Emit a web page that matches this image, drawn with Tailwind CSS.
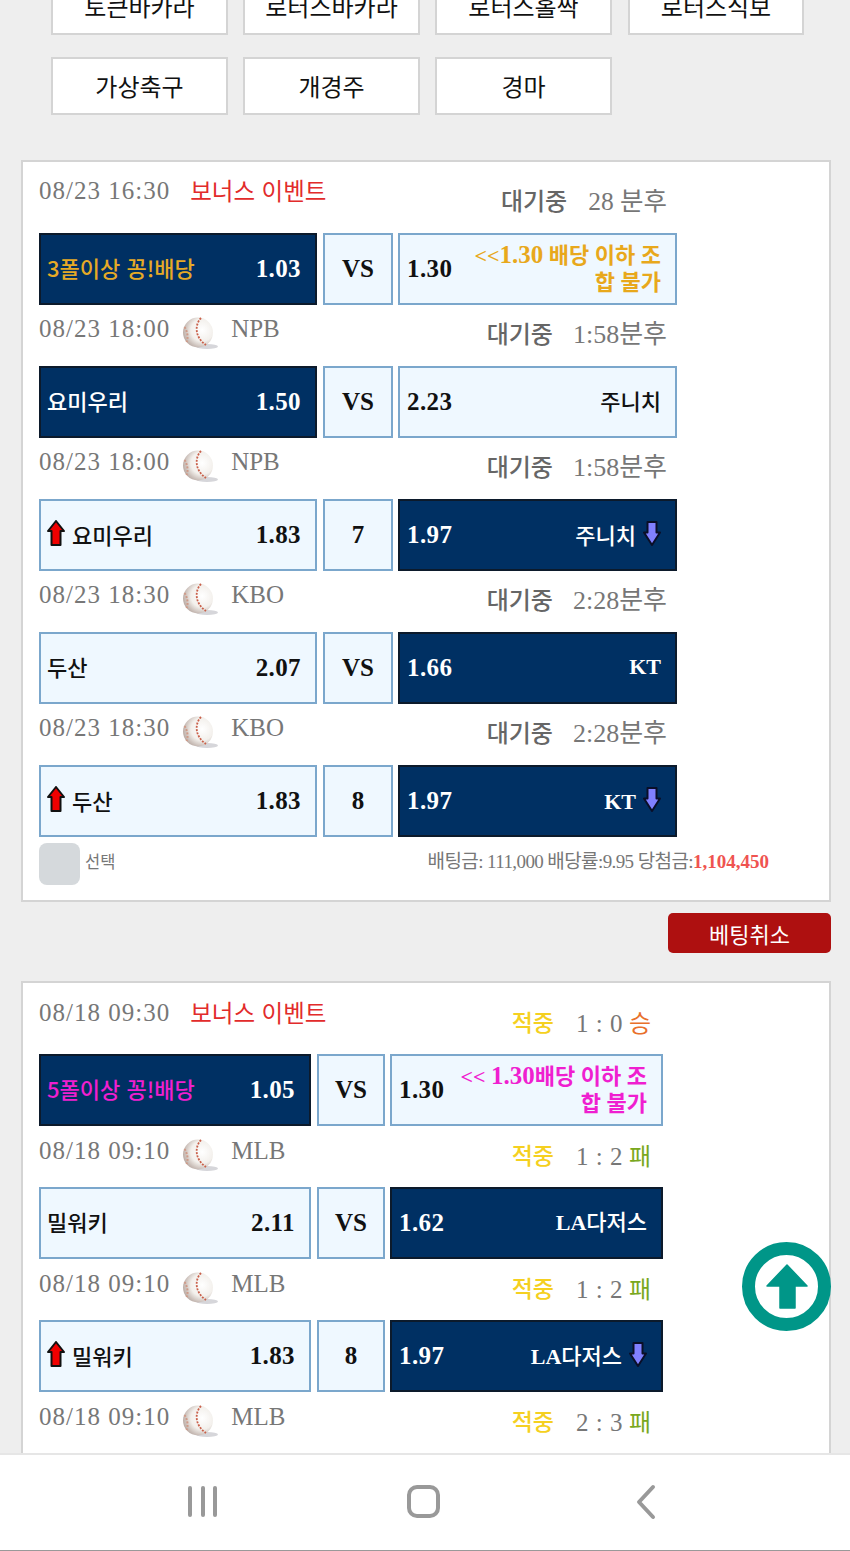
<!DOCTYPE html>
<html lang="ko"><head><meta charset="utf-8">
<script src="https://cdn.jsdelivr.net/npm/@tailwindcss/browser@4"></script>
</head>
<body class="m-0">
<svg class="absolute w-0 h-0" width="0" height="0">
<defs>
<radialGradient id="bg" cx="64%" cy="42%" r="68%"><stop offset="0" stop-color="#ffffff"/><stop offset=".55" stop-color="#f3f0ec"/><stop offset="1" stop-color="#b5a59e"/></radialGradient>
<symbol id="ball" viewBox="0 0 38 38">
<ellipse cx="25" cy="29.500" rx="11" ry="2.500" fill="#d6d6da"/>
<circle cx="16" cy="15.500" r="15" fill="url(#bg)"/>
<path d="M2.500 10c3 4 4 11 2 15" fill="none" stroke="#cf9a88" stroke-width="2" stroke-dasharray="2 1.500"/>
<path d="M19 1c-6 6-7 19 5 27" fill="none" stroke="#c9604a" stroke-width="1.800" stroke-dasharray="2 1.300"/>
</symbol>
<symbol id="up" viewBox="0 0 18 26"><path d="M9 1 17 11H13.500V25H4.500V11H1Z" fill="#f00000" stroke="#111" stroke-width="2" stroke-linejoin="round"/></symbol>
<symbol id="down" viewBox="0 0 18 25"><path d="M4.500 1H13.500V11.500H17L9 24 1 11.500H4.500Z" fill="#8080ff" stroke="#0a0f28" stroke-width="2" stroke-linejoin="round"/></symbol>
</defs>
</svg>
<div class="relative w-[850px] h-[1551px] overflow-hidden bg-[#eeeeee] font-['Liberation_Serif','Noto_Sans_CJK_KR',serif]">

  <div class="grid grid-cols-[177px_177px_177px_177px] gap-x-[15px] gap-y-[22px] pl-[51px] -mt-[23px] font-['Noto_Sans_CJK_KR',sans-serif] text-[24px] text-[#111]">
    <div class="h-[58px] bg-white border-2 border-[#d4d4d4] flex items-center justify-center leading-none">토큰바카라</div>
    <div class="h-[58px] bg-white border-2 border-[#d4d4d4] flex items-center justify-center leading-none">로터스바카라</div>
    <div class="h-[58px] bg-white border-2 border-[#d4d4d4] flex items-center justify-center leading-none">로터스홀짝</div>
    <div class="h-[58px] ml-[1px] bg-white border-2 border-[#d4d4d4] flex items-center justify-center leading-none">로터스식보</div>
    <div class="h-[58px] bg-white border-2 border-[#d4d4d4] flex items-center justify-center leading-none">가상축구</div>
    <div class="h-[58px] bg-white border-2 border-[#d4d4d4] flex items-center justify-center leading-none">개경주</div>
    <div class="h-[58px] bg-white border-2 border-[#d4d4d4] flex items-center justify-center leading-none">경마</div>
  </div>

  <!-- card 1 -->
  <div class="mt-[45px] ml-[21px] w-[810px] h-[742px] bg-white border-2 border-[#d4d4d4] pl-4">
    <div class="w-[628px] h-[71px] flex justify-between items-start">
      <div class="pt-[14px] flex items-center gap-5 text-[25px] leading-[30px] text-[#777] tracking-[1px]"><span>08/23 16:30</span><span class="-mt-[2px] font-['Noto_Sans_CJK_KR'] text-[23.500px] tracking-normal text-[#e22b2b]">보너스 이벤트</span></div>
      <div class="pt-[25px] flex items-center gap-[21px] leading-[30px]"><span class="text-[24px] font-medium text-[#666]">대기중</span><span class="text-[25.500px] text-[#777]">28 분후</span></div>
    </div>
    <div class="flex w-[638px] h-[72px]">
      <div class="w-[278px] bg-[#003063] border-2 border-[#0c1a2b] flex items-center justify-between pl-[6px] pr-[14px]"><span class="mb-[4px] font-['Noto_Sans_CJK_KR'] text-[22px] font-medium text-[#e6aa26] leading-none">3폴이상 꽁!배당</span><span class="mb-[2px] text-[25px] font-bold tracking-[.4px] text-white leading-none">1.03</span></div>
      <div class="ml-[6px] mr-[5px] w-[70px] bg-[#eff8ff] border-2 border-[#7ba7cc] flex items-center justify-center text-[25px] font-bold text-[#111] leading-none"><span class="mb-[2px]">VS</span></div>
      <div class="w-[279px] shrink-0 bg-[#eff8ff] border-2 border-[#7ba7cc] flex items-center justify-between pl-[7px] pr-[14px]"><span class="mb-[2px] text-[25px] font-bold tracking-[.4px] text-[#111] leading-none">1.30</span><span class="mb-[2px] text-right text-[#e8a81c] text-[22px] font-bold leading-[27px]">&lt;&lt;<span class="text-[25px]">1.30</span> 배당 이하 조<br>합 불가</span></div>
    </div>

    <div class="w-[628px] h-[61px] flex justify-between items-start">
      <div class="pt-[9px] flex items-center gap-3 text-[25px] leading-[30px] text-[#777]"><span class="tracking-[1px]">08/23 18:00</span><svg class="w-[38px] h-[38px] -my-1 -mr-[1px] translate-y-[7px] blur-[0.4px]"><use href="#ball"/></svg><span>NPB</span></div>
      <div class="pt-[15px] flex items-center gap-[20px] leading-[30px]"><span class="text-[24px] font-medium text-[#666]">대기중</span><span class="text-[26px] text-[#777]">1:58분후</span></div>
    </div>
    <div class="flex w-[638px] h-[72px]">
      <div class="w-[278px] bg-[#003063] border-2 border-[#0c1a2b] flex items-center justify-between pl-[6px] pr-[14px]"><span class="mb-[4px] font-['Noto_Sans_CJK_KR'] text-[22px] font-medium text-white leading-none">요미우리</span><span class="mb-[2px] text-[25px] font-bold tracking-[.4px] text-white leading-none">1.50</span></div>
      <div class="ml-[6px] mr-[5px] w-[70px] bg-[#eff8ff] border-2 border-[#7ba7cc] flex items-center justify-center text-[25px] font-bold text-[#111] leading-none"><span class="mb-[2px]">VS</span></div>
      <div class="w-[279px] shrink-0 bg-[#eff8ff] border-2 border-[#7ba7cc] flex items-center justify-between pl-[7px] pr-[14px]"><span class="mb-[2px] text-[25px] font-bold tracking-[.4px] text-[#111] leading-none">2.23</span><span class="mb-[4px] font-['Noto_Sans_CJK_KR'] text-[22px] font-medium text-[#111] leading-none">주니치</span></div>
    </div>

    <div class="w-[628px] h-[61px] flex justify-between items-start">
      <div class="pt-[9px] flex items-center gap-3 text-[25px] leading-[30px] text-[#777]"><span class="tracking-[1px]">08/23 18:00</span><svg class="w-[38px] h-[38px] -my-1 -mr-[1px] translate-y-[7px] blur-[0.4px]"><use href="#ball"/></svg><span>NPB</span></div>
      <div class="pt-[15px] flex items-center gap-[20px] leading-[30px]"><span class="text-[24px] font-medium text-[#666]">대기중</span><span class="text-[26px] text-[#777]">1:58분후</span></div>
    </div>
    <div class="flex w-[638px] h-[72px]">
      <div class="w-[278px] bg-[#eff8ff] border-2 border-[#7ba7cc] flex items-center justify-between pl-[6px] pr-[14px]"><span class="flex items-center gap-[7px] font-['Noto_Sans_CJK_KR'] text-[22px] font-medium text-[#111] leading-none"><svg class="w-[18px] h-[26px] -mt-[4px]"><use href="#up"/></svg><span class="mb-[2px]">요미우리</span></span><span class="mb-[2px] text-[25px] font-bold tracking-[.4px] text-[#111] leading-none">1.83</span></div>
      <div class="ml-[6px] mr-[5px] w-[70px] bg-[#eff8ff] border-2 border-[#7ba7cc] flex items-center justify-center text-[25px] font-bold text-[#111] leading-none"><span class="mb-[2px]">7</span></div>
      <div class="w-[279px] shrink-0 bg-[#003063] border-2 border-[#0c1a2b] flex items-center justify-between pl-[7px] pr-[14px]"><span class="mb-[2px] text-[25px] font-bold tracking-[.4px] text-white leading-none">1.97</span><span class="flex items-center gap-[7px] font-['Noto_Sans_CJK_KR'] text-[22px] font-medium text-white leading-none"><span class="mb-[2px]">주니치</span><svg class="w-[18px] h-[25px] -mt-[4px]"><use href="#down"/></svg></span></div>
    </div>

    <div class="w-[628px] h-[61px] flex justify-between items-start">
      <div class="pt-[9px] flex items-center gap-3 text-[25px] leading-[30px] text-[#777]"><span class="tracking-[1px]">08/23 18:30</span><svg class="w-[38px] h-[38px] -my-1 -mr-[1px] translate-y-[7px] blur-[0.4px]"><use href="#ball"/></svg><span>KBO</span></div>
      <div class="pt-[15px] flex items-center gap-[20px] leading-[30px]"><span class="text-[24px] font-medium text-[#666]">대기중</span><span class="text-[26px] text-[#777]">2:28분후</span></div>
    </div>
    <div class="flex w-[638px] h-[72px]">
      <div class="w-[278px] bg-[#eff8ff] border-2 border-[#7ba7cc] flex items-center justify-between pl-[6px] pr-[14px]"><span class="mb-[4px] font-['Noto_Sans_CJK_KR'] text-[22px] font-medium text-[#111] leading-none">두산</span><span class="mb-[2px] text-[25px] font-bold tracking-[.4px] text-[#111] leading-none">2.07</span></div>
      <div class="ml-[6px] mr-[5px] w-[70px] bg-[#eff8ff] border-2 border-[#7ba7cc] flex items-center justify-center text-[25px] font-bold text-[#111] leading-none"><span class="mb-[2px]">VS</span></div>
      <div class="w-[279px] shrink-0 bg-[#003063] border-2 border-[#0c1a2b] flex items-center justify-between pl-[7px] pr-[14px]"><span class="mb-[2px] text-[25px] font-bold tracking-[.4px] text-white leading-none">1.66</span><span class="mb-[2px] text-[22px] font-bold text-white leading-none">KT</span></div>
    </div>

    <div class="w-[628px] h-[61px] flex justify-between items-start">
      <div class="pt-[9px] flex items-center gap-3 text-[25px] leading-[30px] text-[#777]"><span class="tracking-[1px]">08/23 18:30</span><svg class="w-[38px] h-[38px] -my-1 -mr-[1px] translate-y-[7px] blur-[0.4px]"><use href="#ball"/></svg><span>KBO</span></div>
      <div class="pt-[15px] flex items-center gap-[20px] leading-[30px]"><span class="text-[24px] font-medium text-[#666]">대기중</span><span class="text-[26px] text-[#777]">2:28분후</span></div>
    </div>
    <div class="flex w-[638px] h-[72px]">
      <div class="w-[278px] bg-[#eff8ff] border-2 border-[#7ba7cc] flex items-center justify-between pl-[6px] pr-[14px]"><span class="flex items-center gap-[7px] font-['Noto_Sans_CJK_KR'] text-[22px] font-medium text-[#111] leading-none"><svg class="w-[18px] h-[26px] -mt-[4px]"><use href="#up"/></svg><span class="mb-[2px]">두산</span></span><span class="mb-[2px] text-[25px] font-bold tracking-[.4px] text-[#111] leading-none">1.83</span></div>
      <div class="ml-[6px] mr-[5px] w-[70px] bg-[#eff8ff] border-2 border-[#7ba7cc] flex items-center justify-center text-[25px] font-bold text-[#111] leading-none"><span class="mb-[2px]">8</span></div>
      <div class="w-[279px] shrink-0 bg-[#003063] border-2 border-[#0c1a2b] flex items-center justify-between pl-[7px] pr-[14px]"><span class="mb-[2px] text-[25px] font-bold tracking-[.4px] text-white leading-none">1.97</span><span class="flex items-center gap-[7px] text-[22px] font-bold text-white leading-none"><span class="mt-[1px]">KT</span><svg class="w-[18px] h-[25px] -mt-[4px]"><use href="#down"/></svg></span></div>
    </div>

    <div class="flex items-start mt-[6px] w-[730px]">
      <div class="w-[41px] h-[42px] rounded-[8px] bg-[#d5d9dc]"></div>
      <span class="ml-[5px] mt-[8px] font-['Noto_Sans_CJK_KR'] text-[16.500px] leading-[20px] text-[#777]">선택</span>
      <div class="ml-auto mt-[8px] text-[19px] tracking-[-.6px] leading-[22px] text-[#777] whitespace-nowrap">배팅금: 111,000 배당률:9.95 당첨금:<span class="font-bold tracking-normal text-[#ef5350]">1,104,450</span></div>
    </div>
  </div>

  <div class="mt-[11px] ml-[668px] w-[163px] h-[40px] rounded-[5px] bg-[#ae1010] flex items-center justify-center font-['Noto_Sans_CJK_KR'] text-[22px] text-white leading-none">베팅취소</div>

  <!-- card 2 -->
  <div class="mt-[28px] ml-[21px] w-[810px] h-[600px] bg-white border-2 border-[#d4d4d4] pl-4">
    <div class="w-[612px] h-[71px] flex justify-between items-start">
      <div class="pt-[15px] flex items-center gap-5 text-[25px] leading-[30px] text-[#777] tracking-[1px]"><span>08/18 09:30</span><span class="-mt-[2px] font-['Noto_Sans_CJK_KR'] text-[23.500px] tracking-normal text-[#e22b2b]">보너스 이벤트</span></div>
      <div class="pt-[26px] flex items-center leading-[30px]"><span class="text-[23px] font-medium text-[#f5d020]">적중</span><span class="ml-[22px] text-[25px] text-[#777] tracking-[.5px]">1 : 0</span><span class="ml-[6px] text-[24px] text-[#e8702a]">승</span></div>
    </div>
    <div class="flex w-[624px] h-[72px]">
      <div class="w-[272px] bg-[#003063] border-2 border-[#0c1a2b] flex items-center justify-between pl-[6px] pr-[14px]"><span class="mb-[4px] font-['Noto_Sans_CJK_KR'] text-[22px] font-medium text-[#f01fd0] leading-none">5폴이상 꽁!배당</span><span class="mb-[2px] text-[25px] font-bold tracking-[.4px] text-white leading-none">1.05</span></div>
      <div class="ml-[6px] mr-[5px] w-[68px] bg-[#eff8ff] border-2 border-[#7ba7cc] flex items-center justify-center text-[25px] font-bold text-[#111] leading-none"><span class="mb-[2px]">VS</span></div>
      <div class="w-[273px] shrink-0 bg-[#eff8ff] border-2 border-[#7ba7cc] flex items-center justify-between pl-[7px] pr-[14px]"><span class="mb-[2px] text-[25px] font-bold tracking-[.4px] text-[#111] leading-none">1.30</span><span class="mb-[2px] text-right text-[#ef1fd0] text-[22px] font-bold leading-[27px]">&lt;&lt; <span class="text-[25px]">1.30</span>배당 이하 조<br>합 불가</span></div>
    </div>

    <div class="w-[612px] h-[61px] flex justify-between items-start">
      <div class="pt-[10px] flex items-center gap-3 text-[25px] leading-[30px] text-[#777]"><span class="tracking-[1px]">08/18 09:10</span><svg class="w-[38px] h-[38px] -my-1 -mr-[1px] translate-y-[7px] blur-[0.4px]"><use href="#ball"/></svg><span>MLB</span></div>
      <div class="pt-[16px] flex items-center leading-[30px]"><span class="text-[23px] font-medium text-[#f5d020]">적중</span><span class="ml-[22px] text-[25px] text-[#777] tracking-[.5px]">1 : 2</span><span class="ml-[6px] text-[24px] text-[#7aa81e]">패</span></div>
    </div>
    <div class="flex w-[624px] h-[72px]">
      <div class="w-[272px] bg-[#eff8ff] border-2 border-[#7ba7cc] flex items-center justify-between pl-[6px] pr-[14px]"><span class="mb-[4px] font-['Noto_Sans_CJK_KR'] text-[22px] font-medium text-[#111] leading-none">밀워키</span><span class="mb-[2px] text-[25px] font-bold tracking-[.4px] text-[#111] leading-none">2.11</span></div>
      <div class="ml-[6px] mr-[5px] w-[68px] bg-[#eff8ff] border-2 border-[#7ba7cc] flex items-center justify-center text-[25px] font-bold text-[#111] leading-none"><span class="mb-[2px]">VS</span></div>
      <div class="w-[273px] shrink-0 bg-[#003063] border-2 border-[#0c1a2b] flex items-center justify-between pl-[7px] pr-[14px]"><span class="mb-[2px] text-[25px] font-bold tracking-[.4px] text-white leading-none">1.62</span><span class="text-[22px] font-medium text-white leading-none"><span class="font-bold">LA</span>다저스</span></div>
    </div>

    <div class="w-[612px] h-[61px] flex justify-between items-start">
      <div class="pt-[10px] flex items-center gap-3 text-[25px] leading-[30px] text-[#777]"><span class="tracking-[1px]">08/18 09:10</span><svg class="w-[38px] h-[38px] -my-1 -mr-[1px] translate-y-[7px] blur-[0.4px]"><use href="#ball"/></svg><span>MLB</span></div>
      <div class="pt-[16px] flex items-center leading-[30px]"><span class="text-[23px] font-medium text-[#f5d020]">적중</span><span class="ml-[22px] text-[25px] text-[#777] tracking-[.5px]">1 : 2</span><span class="ml-[6px] text-[24px] text-[#7aa81e]">패</span></div>
    </div>
    <div class="flex w-[624px] h-[72px]">
      <div class="w-[272px] bg-[#eff8ff] border-2 border-[#7ba7cc] flex items-center justify-between pl-[6px] pr-[14px]"><span class="flex items-center gap-[7px] font-['Noto_Sans_CJK_KR'] text-[22px] font-medium text-[#111] leading-none"><svg class="w-[18px] h-[26px] -mt-[4px]"><use href="#up"/></svg><span class="mb-[2px]">밀워키</span></span><span class="mb-[2px] text-[25px] font-bold tracking-[.4px] text-[#111] leading-none">1.83</span></div>
      <div class="ml-[6px] mr-[5px] w-[68px] bg-[#eff8ff] border-2 border-[#7ba7cc] flex items-center justify-center text-[25px] font-bold text-[#111] leading-none"><span class="mb-[2px]">8</span></div>
      <div class="w-[273px] shrink-0 bg-[#003063] border-2 border-[#0c1a2b] flex items-center justify-between pl-[7px] pr-[14px]"><span class="mb-[2px] text-[25px] font-bold tracking-[.4px] text-white leading-none">1.97</span><span class="flex items-center gap-[7px] text-[22px] font-medium text-white leading-none"><span class="mt-[2px]"><span class="font-bold">LA</span>다저스</span><svg class="w-[18px] h-[25px] -mt-[4px]"><use href="#down"/></svg></span></div>
    </div>

    <div class="w-[612px] h-[61px] flex justify-between items-start">
      <div class="pt-[10px] flex items-center gap-3 text-[25px] leading-[30px] text-[#777]"><span class="tracking-[1px]">08/18 09:10</span><svg class="w-[38px] h-[38px] -my-1 -mr-[1px] translate-y-[7px] blur-[0.4px]"><use href="#ball"/></svg><span>MLB</span></div>
      <div class="pt-[16px] flex items-center leading-[30px]"><span class="text-[23px] font-medium text-[#f5d020]">적중</span><span class="ml-[22px] text-[25px] text-[#777] tracking-[.5px]">2 : 3</span><span class="ml-[6px] text-[24px] text-[#7aa81e]">패</span></div>
    </div>
  </div>

  <!-- scroll to top -->
  <div class="absolute left-[742px] top-[1242px] w-[89px] h-[89px] rounded-full border-[13px] border-[#009688] bg-white flex items-center justify-center">
    <svg width="42" height="46" viewBox="0 0 42 46"><path d="M21 1 41 22H29V44H14V22H1Z" fill="#009688" stroke="#009688" stroke-width="1.500" stroke-linejoin="round"/></svg>
  </div>

  <!-- bottom nav -->
  <div class="absolute left-0 right-0 bottom-0 h-[98px] bg-white border-t-2 border-t-[#e6e6e6] border-b border-b-[#999]">
    <div class="absolute left-[188px] top-[31px] flex gap-[8.500px]"><div class="w-[4px] h-[31px] rounded-sm bg-[#999]"></div><div class="w-[4px] h-[31px] rounded-sm bg-[#999]"></div><div class="w-[4px] h-[31px] rounded-sm bg-[#999]"></div></div>
    <div class="absolute left-[407px] top-[30px] w-[33px] h-[33px] rounded-[10px] border-[4px] border-[#999]"></div>
    <svg class="absolute left-[634px] top-[29px]" width="22" height="36" viewBox="0 0 22 36"><path d="M19 3 5 18 19 33" fill="none" stroke="#999" stroke-width="4" stroke-linecap="round" stroke-linejoin="round"/></svg>
  </div>
</div>
</body></html>
